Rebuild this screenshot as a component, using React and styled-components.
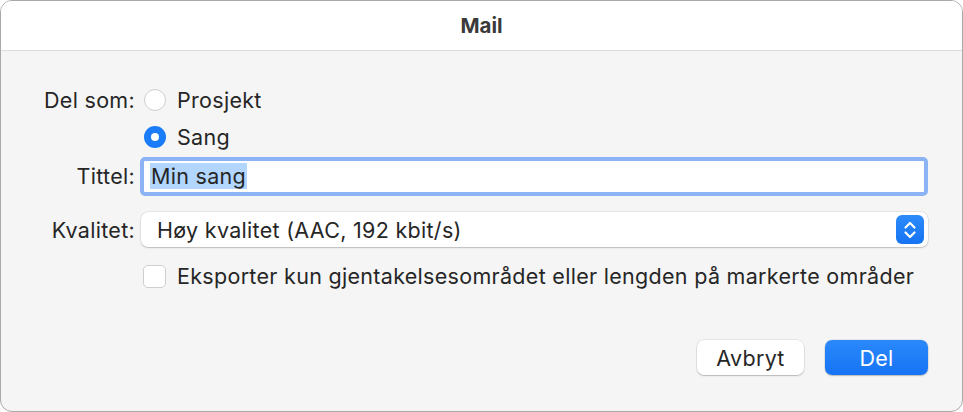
import styled, { createGlobalStyle } from "styled-components";

const Global = createGlobalStyle`
  html, body { margin: 0; padding: 0; background: #ffffff; }
  body { font-family: Inter, "Liberation Sans", sans-serif; color: #262626; }
`;

const Window = styled.div`
  box-sizing: border-box;
  width: 963px;
  height: 412px;
  border: 1px solid #a9a9a9;
  border-radius: 12px;
  overflow: hidden;
  background: #f5f5f5;
  display: flex;
  flex-direction: column;
`;

const TitleBar = styled.div`
  height: 49px;
  background: #ffffff;
  border-bottom: 1px solid #dcdcdc;
  display: flex;
  align-items: center;
  justify-content: center;
  font-size: 20.5px;
  font-weight: 700;
  color: #3a3a3a;
`;

const Body = styled.div`
  flex: 1;
  padding: 30px 34px 0 0;
  display: flex;
  flex-direction: column;
  font-size: 21.5px;
  letter-spacing: 0.3px;
`;

const Row = styled.div`
  display: flex;
  align-items: center;
  height: ${(p) => p.h || 37}px;
  margin-top: ${(p) => p.mt || 0}px;
`;

const Label = styled.div`
  width: 135px;
  text-align: right;
  padding-right: 1px;
  box-sizing: border-box;
  flex-shrink: 0;
`;

const Radio = styled.span`
  box-sizing: border-box;
  width: 22px;
  height: 22px;
  border-radius: 50%;
  flex-shrink: 0;
  margin-left: 8px;
  background: ${(p) => (p.on ? "#1a7cf8" : "#ffffff")};
  border: ${(p) => (p.on ? "none" : "1px solid #cfcfcf")};
  display: flex;
  align-items: center;
  justify-content: center;
  &::after {
    content: "";
    display: ${(p) => (p.on ? "block" : "none")};
    width: 8px;
    height: 8px;
    border-radius: 50%;
    background: #ffffff;
  }
`;

const OptionText = styled.span`
  margin-left: 11px;
`;

const FieldRing = styled.div`
  flex: 1;
  margin-left: 4px;
  height: 39px;
  box-sizing: border-box;
  border: 4px solid #8cb4f5;
  border-radius: 5px;
  background: #ffffff;
  display: flex;
  align-items: center;
  padding-left: 6px;
`;

const Selected = styled.span`
  background: #b3d6fe;
  line-height: 26px;
  padding: 0 1px;
`;

const Popup = styled.div`
  flex: 1;
  margin-left: 5px;
  height: 35px;
  box-sizing: border-box;
  background: #ffffff;
  border-radius: 7px;
  box-shadow: 0 0 0 0.5px rgba(0, 0, 0, 0.12), 0 1px 1.5px rgba(0, 0, 0, 0.18);
  display: flex;
  align-items: center;
  justify-content: space-between;
  padding: 0 4px 0 16px;
`;

const Stepper = styled.span`
  width: 28px;
  height: 29px;
  border-radius: 6px;
  background: linear-gradient(#2d8bfa, #1673f4);
  display: flex;
  align-items: center;
  justify-content: center;
`;

const Check = styled.span`
  box-sizing: border-box;
  width: 23px;
  height: 23px;
  margin-left: 142px;
  border-radius: 5px;
  background: #ffffff;
  border: 1px solid #cfcfcf;
  flex-shrink: 0;
`;

const Buttons = styled.div`
  display: flex;
  justify-content: flex-end;
  gap: 21px;
  margin-top: 49px;
`;

const Button = styled.button`
  height: 35px;
  width: ${(p) => p.w}px;
  border: none;
  border-radius: 7px;
  font-family: inherit;
  font-size: 21.5px;
  letter-spacing: 0.3px;
  background: ${(p) => (p.primary ? "linear-gradient(#2b89fb, #1673f5)" : "#ffffff")};
  color: ${(p) => (p.primary ? "#ffffff" : "#262626")};
  box-shadow: 0 0 0 0.5px rgba(0, 0, 0, 0.12), 0 1px 1.5px rgba(0, 0, 0, 0.2);
  padding: 0;
`;

export default function App() {
  return (
    <>
      <Global />
      <Window>
        <TitleBar>Mail</TitleBar>
        <Body>
          <Row>
            <Label>Del som:</Label>
            <Radio />
            <OptionText>Prosjekt</OptionText>
          </Row>
          <Row>
            <Label />
            <Radio on />
            <OptionText>Sang</OptionText>
          </Row>
          <Row h={42}>
            <Label>Tittel:</Label>
            <FieldRing>
              <Selected>Min sang</Selected>
            </FieldRing>
          </Row>
          <Row h={35} mt={15}>
            <Label>Kvalitet:</Label>
            <Popup>
              <span>Høy kvalitet (AAC, 192 kbit/s)</span>
              <Stepper>
                <svg width="14" height="20" viewBox="0 0 14 20" fill="none" stroke="#fff" strokeWidth="2.2" strokeLinecap="round" strokeLinejoin="round">
                  <path d="M2.5 7.5 L7 3 L11.5 7.5" />
                  <path d="M2.5 12.5 L7 17 L11.5 12.5" />
                </svg>
              </Stepper>
            </Popup>
          </Row>
          <Row h={30} mt={14}>
            <Check />
            <OptionText>Eksporter kun gjentakelsesområdet eller lengden på markerte områder</OptionText>
          </Row>
          <Buttons>
            <Button w={107}>Avbryt</Button>
            <Button primary w={103}>Del</Button>
          </Buttons>
        </Body>
      </Window>
    </>
  );
}
